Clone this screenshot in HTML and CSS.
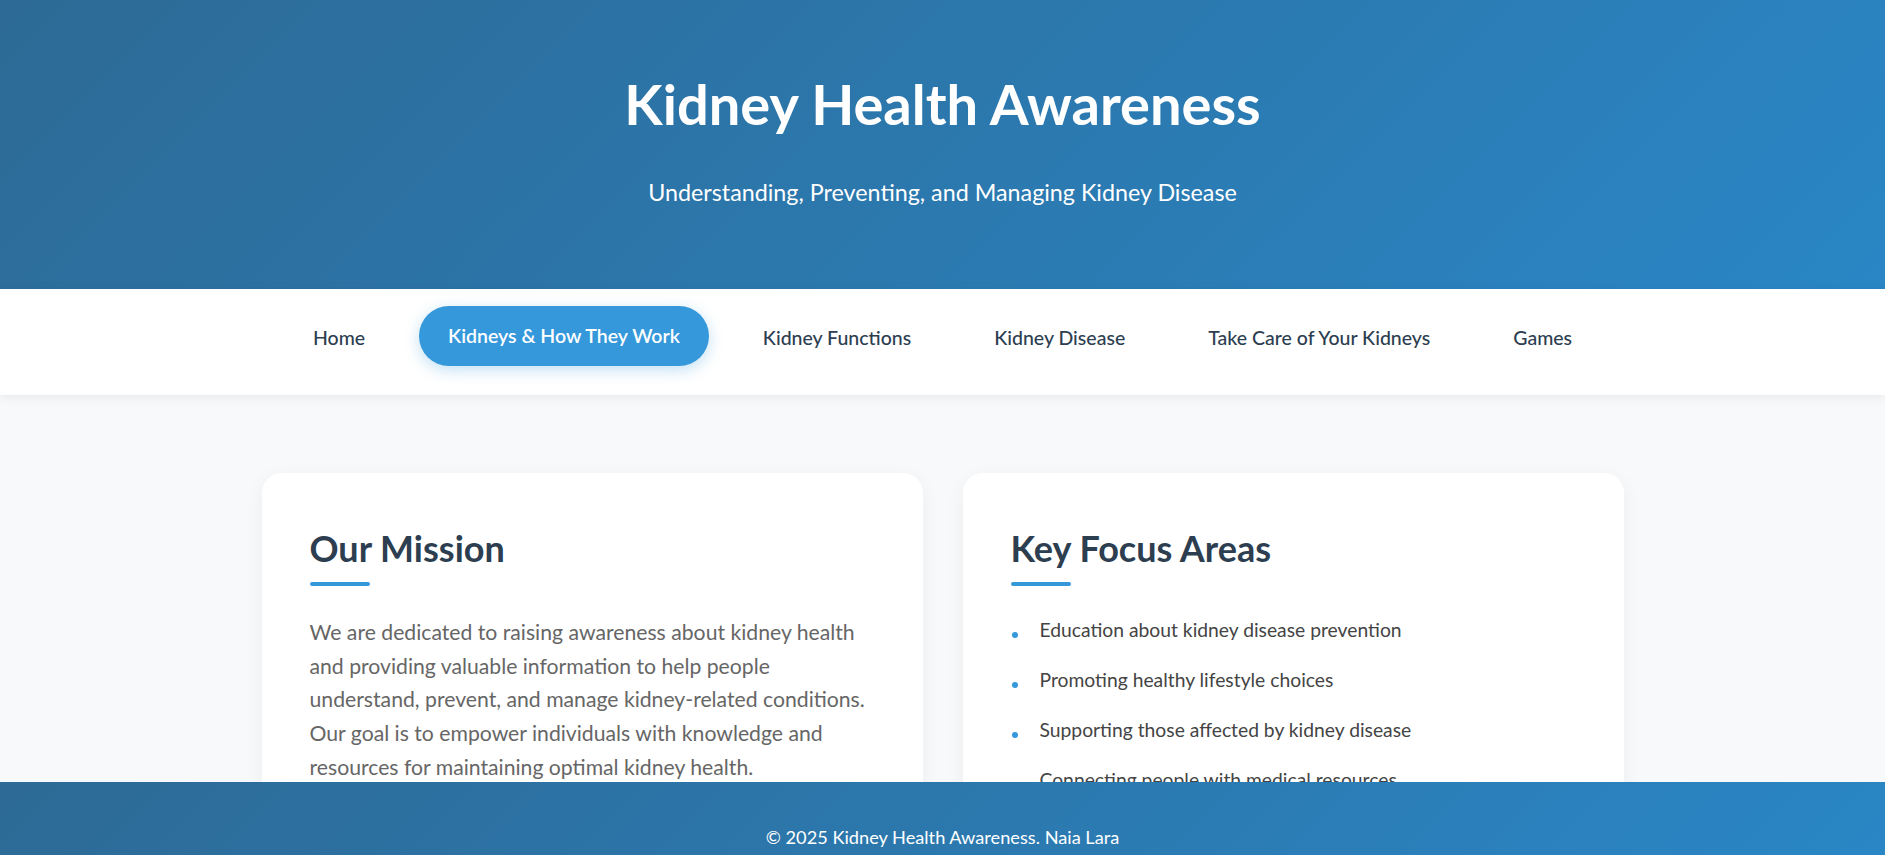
FILE: index.html
```html
<!DOCTYPE html>
<html lang="en">
<head>
<meta charset="utf-8">
<title>Kidney Health Awareness</title>
<link rel="stylesheet" href="styles.css">
</head>
<body>

<header class="hero">
<h1>Kidney Health Awareness</h1>
<p class="tagline">Understanding, Preventing, and Managing Kidney Disease</p>
</header>

<nav class="menu">
<ul>
<li><a href="#">Home</a></li>
<li><a href="#" class="active">Kidneys &amp; How They Work</a></li>
<li><a href="#">Kidney Functions</a></li>
<li><a href="#">Kidney Disease</a></li>
<li><a href="#">Take Care of Your Kidneys</a></li>
<li><a href="#">Games</a></li>
</ul>
</nav>

<main class="content">
<section class="card">
<h2>Our Mission</h2>
<p>We are dedicated to raising awareness about kidney health and providing valuable information to help people understand, prevent, and manage kidney-related conditions. Our goal is to empower individuals with knowledge and resources for maintaining optimal kidney health.</p>
</section>
<section class="card">
<h2>Key Focus Areas</h2>
<ul class="focus">
<li>Education about kidney disease prevention</li>
<li>Promoting healthy lifestyle choices</li>
<li>Supporting those affected by kidney disease</li>
<li>Connecting people with medical resources</li>
</ul>
</section>
</main>

<footer class="foot">
<p>&copy; 2025 Kidney Health Awareness. Naia Lara</p>
</footer>

</body>
</html>
```

FILE: styles.css
```css
* {
  box-sizing: border-box;
}

body {
  margin: 0;
  padding: 0;
  font-family: Lato, "Open Sans", sans-serif;
  background-color: #f8f9fa;
  color: #333;
}

.hero {
  background: linear-gradient(135deg, #2d6a96 0%, #2a86c5 100%);
  color: #fff;
  text-align: center;
  height: 289px;
  padding-top: 70px;
}

.hero h1 {
  margin: 0;
  font-size: 56px;
  font-weight: 700;
  line-height: 1.2;
}

.tagline {
  margin: 40px 0 0;
  font-size: 23.3px;
  line-height: 1.3;
}

.menu {
  background: #fff;
  height: 106px;
  padding-top: 19px;
  box-shadow: 0 2px 10px rgba(0, 0, 0, 0.08);
  position: relative;
}

.menu ul {
  list-style: none;
  margin: 0;
  padding: 0;
  display: flex;
  justify-content: center;
  gap: 25px;
}

.menu a {
  display: block;
  padding: 18px 29px;
  line-height: 24px;
  font-size: 19.5px;
  font-weight: 500;
  color: #2c3e50;
  text-decoration: none;
  border-radius: 30px;
}

.menu a.active {
  background: #3498db;
  color: #fff;
  font-weight: 600;
  transform: translateY(-2px);
  box-shadow: 0 4px 15px rgba(52, 152, 219, 0.3);
}

.content {
  max-width: 1362px;
  margin: 0 auto;
  padding: 78px 0 120px;
  display: grid;
  grid-template-columns: 1fr 1fr;
  gap: 40px;
}

.card {
  background: #fff;
  border-radius: 20px;
  padding: 54px 48px 48px;
  box-shadow: 0 5px 20px rgba(0, 0, 0, 0.05);
}

.card h2 {
  margin: 0 0 30px;
  font-size: 36px;
  line-height: 1.2;
  font-weight: 700;
  color: #2c3e50;
}

.card h2::after {
  content: "";
  display: block;
  width: 60px;
  height: 4px;
  margin-top: 12px;
  border-radius: 2px;
  background: #3498db;
}

.card p {
  margin: 0;
  font-size: 21.2px;
  line-height: 33.6px;
  color: #666;
}

.focus {
  list-style: none;
  margin: 0;
  padding: 0;
  display: grid;
  gap: 22px;
}

.focus li {
  display: flex;
  gap: 22px;
  font-size: 19.3px;
  line-height: 28px;
  color: #444;
}

.focus li::before {
  content: "";
  flex: none;
  width: 6px;
  height: 6px;
  margin: 16px 0 0 1px;
  border-radius: 50%;
  background: #3498db;
}

.foot {
  position: fixed;
  left: 0;
  right: 0;
  bottom: 0;
  height: 73px;
  padding-top: 44px;
  background: linear-gradient(135deg, #2d6a96 0%, #2a86c5 100%);
  color: #fff;
  text-align: center;
}

.foot p {
  margin: 0;
  font-size: 18.2px;
  line-height: 22px;
}
```
